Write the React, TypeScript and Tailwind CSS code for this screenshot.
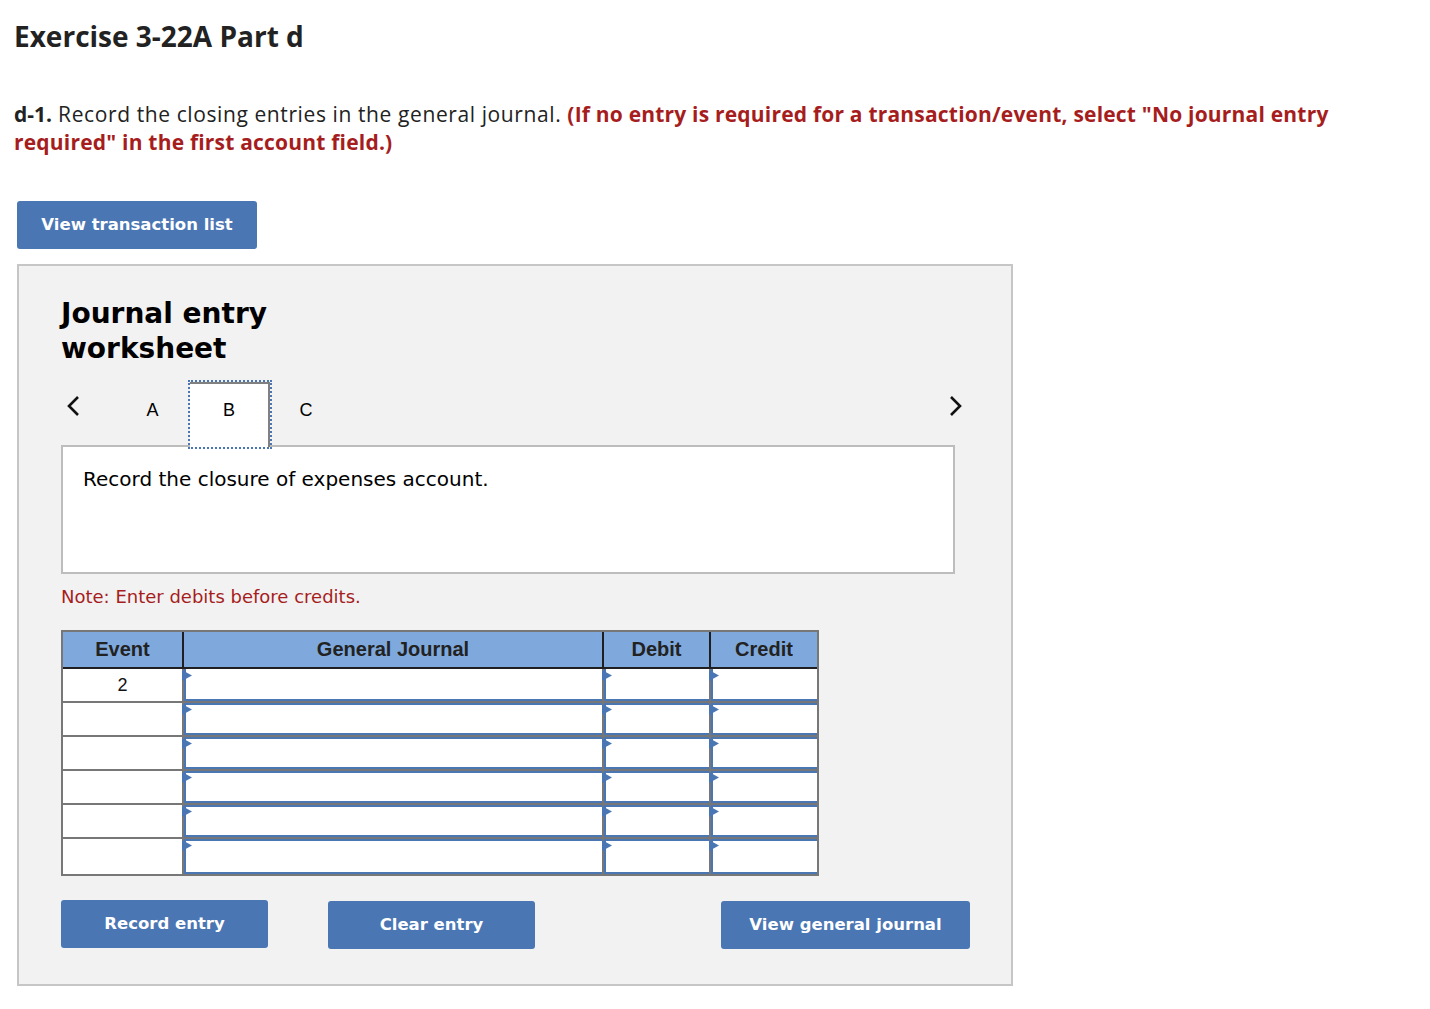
import React from 'react'

const ROWS = ['2', '', '', '', '', '']

function Chevron({ dir }: { dir: 'left' | 'right' }) {
  return (
    <svg width="14" height="22" viewBox="0 0 14 22" fill="none">
      <path
        d={dir === 'left' ? 'M12 2 L3 11 L12 20' : 'M2 2 L11 11 L2 20'}
        stroke="#111"
        strokeWidth="2.6"
      />
    </svg>
  )
}

// little blue flag at the top-left of each input cell
function Marker() {
  return (
    <svg className="absolute left-[-2px] top-[1px] z-10 h-[11px] w-[10px]" viewBox="0 0 10 11">
      <path d="M0 0 L10 5.5 L0 11 Z" fill="#4a76b4" />
    </svg>
  )
}

function InputCell({ first, w, last }: { first: boolean; w: string; last?: boolean }) {
  return (
    <div className={`relative ${w} ${last ? '' : 'border-r-2 border-[#777]'}`}>
      <div
        className={`h-full border-b-2 border-l-2 border-[#4a76b4] bg-white ${first ? '' : 'border-t-2'}`}
      />
      <Marker />
    </div>
  )
}

export default function App() {
  return (
    <div className="min-h-screen bg-white pl-[14px] pt-[19px] font-['Open_Sans',sans-serif] text-[#222]">
      <h1 className="text-[28px] font-bold leading-[34px]">Exercise 3-22A Part d</h1>

      <p className="mt-[47px] w-[1340px] text-[21px] leading-[28px]">
        <span className="font-bold">d-1.</span>
        <span className="tracking-[0.6px]"> Record the closing entries in the general journal. </span>
        <span className="font-bold tracking-[0.2px] text-[#a61d1d]">
          (If no entry is required for a transaction/event, select "No journal entry
        </span>
        <br />
        <span className="font-bold tracking-[0.2px] text-[#a61d1d]">required" in the first account field.)</span>
      </p>

      <button className="ml-[3px] mt-[45px] h-[48px] w-[240px] rounded-[3px] bg-[#4a76b4] font-['DejaVu_Sans',sans-serif] text-[16.5px] font-bold text-white">
        View transaction list
      </button>

      <div className="ml-[3px] mt-[15px] w-[996px] border-2 border-[#c6c6c6] bg-[#f2f2f2] pb-[35px] pl-[42px] pr-[41px] pt-[30px]">
        <h2 className="font-['DejaVu_Sans',sans-serif] text-[28px] font-bold leading-[35px] text-black">
          Journal entry
          <br />
          worksheet
        </h2>

        {/* tabs */}
        <div className="mt-[16px] flex h-[63px] w-[909px] items-start font-['Liberation_Sans',sans-serif] text-[18px] text-black">
          <div className="w-[54px] pl-[5px] pt-[13px]">
            <Chevron dir="left" />
          </div>
          <div className="w-[75px] pt-[18px] text-center leading-[20px]">A</div>
          <div className="relative z-10 h-[65px] w-[80px] border-r-2 border-t-2 border-[#808080] bg-white pt-[16px] text-center leading-[20px] outline-2 outline-dotted outline-[#4a76b4]">
            B
          </div>
          <div className="w-[72px] pt-[18px] text-center leading-[20px]">C</div>
          <div className="flex-1" />
          <div className="pr-[7px] pt-[13px]">
            <Chevron dir="right" />
          </div>
        </div>

        <div className="h-[129px] w-[894px] border-2 border-[#bdbdbd] bg-white px-[20px] pt-[19px] font-['DejaVu_Sans',sans-serif] text-[20px] leading-[26px] text-black">
          Record the closure of expenses account.
        </div>

        <p className="mt-[13px] font-['DejaVu_Sans',sans-serif] text-[18px] leading-[20px] text-[#a61d1d]">
          Note: Enter debits before credits.
        </p>

        {/* journal table */}
        <div className="mt-[23px] w-[758px] border-2 border-[#777] font-['Liberation_Sans',sans-serif] text-[18px]">
          <div className="flex h-[37px] border-b-2 border-[#1f1f1f] bg-[#7fa9dd] text-[20px] font-bold leading-[35px] text-[#222]">
            <div className="w-[121px] border-r-2 border-[#1f1f1f] text-center">Event</div>
            <div className="w-[420px] border-r-2 border-[#1f1f1f] text-center">General Journal</div>
            <div className="w-[107px] border-r-2 border-[#1f1f1f] text-center">Debit</div>
            <div className="w-[106px] text-center">Credit</div>
          </div>
          {ROWS.map((ev, i) => (
            <div
              key={i}
              className={`flex bg-white ${i < ROWS.length - 1 ? 'h-[34px] border-b-2 border-[#777]' : 'h-[35px]'}`}
            >
              <div className="w-[121px] border-r-2 border-[#777] text-center leading-[32px] text-[#111]">{ev}</div>
              <InputCell first={i === 0} w="w-[420px]" />
              <InputCell first={i === 0} w="w-[107px]" />
              <InputCell first={i === 0} w="w-[106px]" last />
            </div>
          ))}
        </div>

        <div className="mt-[24px] flex w-[909px] items-start font-['DejaVu_Sans',sans-serif] text-[16.5px] font-bold text-white">
          <button className="h-[48px] w-[207px] rounded-[3px] bg-[#4a76b4]">Record entry</button>
          <button className="ml-[60px] mt-[1px] h-[48px] w-[207px] rounded-[3px] bg-[#4a76b4]">Clear entry</button>
          <div className="flex-1" />
          <button className="mt-[1px] h-[48px] w-[249px] rounded-[3px] bg-[#4a76b4]">View general journal</button>
        </div>
      </div>
    </div>
  )
}
